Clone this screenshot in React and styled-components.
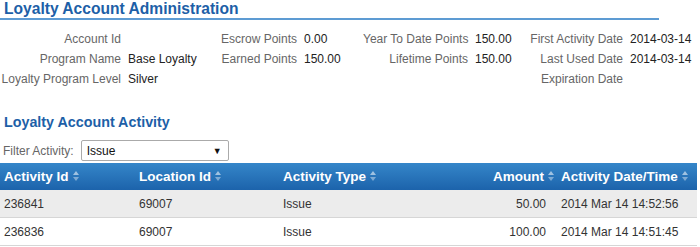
import styled, { createGlobalStyle } from "styled-components";

const Global = createGlobalStyle`
  body {
    margin: 0;
    background: #fff;
    font-family: "Liberation Sans", Arial, sans-serif;
    font-size: 12px;
    color: #333;
  }
`;

const Page = styled.div`
  width: 700px;
  height: 247px;
  overflow: hidden;
`;

const Title = styled.h1`
  margin: 0;
  width: 659px;
  padding: 0 0 1px 4px;
  box-sizing: border-box;
  font-size: 15.6px;
  line-height: 17px;
  font-weight: bold;
  color: #1d5fa7;
  border-bottom: 2px solid #5d9bd3;
`;

const InfoGrid = styled.div`
  display: grid;
  grid-template-columns: 121px 80px 82px 52px 105px 45px 96px auto;
  column-gap: 7px;
  margin-top: 9px;
`;

const Label = styled.div`
  text-align: right;
  color: #666;
  line-height: 20px;
  white-space: nowrap;
`;

const Value = styled.div`
  color: #222;
  line-height: 20px;
  white-space: nowrap;
`;

const SubTitle = styled.h2`
  margin: 25px 0 0 4px;
  font-size: 14.3px;
  line-height: 16px;
  font-weight: bold;
  color: #1d5fa7;
`;

const FilterRow = styled.div`
  display: flex;
  align-items: center;
  gap: 7px;
  margin: 10px 0 2px 3px;
`;

const FilterLabel = styled.span`
  color: #666;
`;

const Select = styled.div`
  width: 148px;
  height: 21px;
  box-sizing: border-box;
  border: 1px solid #aaa;
  border-radius: 2px;
  display: flex;
  align-items: center;
  justify-content: space-between;
  padding: 0 6px 0 5px;
  color: #111;
  font-size: 12px;
`;

const Arrow = styled.span`
  font-size: 9px;
  color: #111;
`;

const Table = styled.table`
  width: 697px;
  border-collapse: collapse;
  table-layout: fixed;
`;

const Th = styled.th`
  height: 27px;
  padding: 0 ${(p) => (p.$right ? "3px" : "0")} 0 4px;
  text-align: ${(p) => (p.$right ? "right" : "left")};
  font-size: 13.5px;
  font-weight: bold;
  color: #fff;
  white-space: nowrap;
  background: linear-gradient(#3586c9, #1c63ab);
`;

const Tr = styled.tr`
  background: ${(p) => (p.$alt ? "#ececec" : "#fff")};
  border-bottom: 1px solid #d6d6d6;
`;

const Td = styled.td`
  height: 27px;
  padding: 0 ${(p) => (p.$right ? "11px" : "0")} 0 4px;
  text-align: ${(p) => (p.$right ? "right" : "left")};
  color: #333;
  white-space: nowrap;
`;

const SortWrap = styled.span`
  display: inline-flex;
  flex-direction: column;
  gap: 2px;
  margin-left: 4px;
  vertical-align: middle;
  position: relative;
  top: -1px;
`;

const Tri = styled.span`
  width: 0;
  height: 0;
  border-left: 3.5px solid transparent;
  border-right: 3.5px solid transparent;
  ${(p) =>
    p.$down
      ? "border-top: 4px solid rgba(255,255,255,0.4);"
      : "border-bottom: 4px solid rgba(255,255,255,0.55);"}
`;

const Sort = () => (
  <SortWrap>
    <Tri />
    <Tri $down />
  </SortWrap>
);

const info = [
  ["Account Id", "", "Escrow Points", "0.00", "Year To Date Points", "150.00", "First Activity Date", "2014-03-14"],
  ["Program Name", "Base Loyalty", "Earned Points", "150.00", "Lifetime Points", "150.00", "Last Used Date", "2014-03-14"],
  ["Loyalty Program Level", "Silver", "", "", "", "", "Expiration Date", ""],
];

const rows = [
  ["236841", "69007", "Issue", "50.00", "2014 Mar 14 14:52:56"],
  ["236836", "69007", "Issue", "100.00", "2014 Mar 14 14:51:45"],
];

export default function App() {
  return (
    <Page>
      <Global />
      <Title>Loyalty Account Administration</Title>
      <InfoGrid>
        {info.map((r, i) =>
          r.map((c, j) =>
            j % 2 === 0 ? <Label key={`${i}-${j}`}>{c}</Label> : <Value key={`${i}-${j}`}>{c}</Value>
          )
        )}
      </InfoGrid>
      <SubTitle>Loyalty Account Activity</SubTitle>
      <FilterRow>
        <FilterLabel>Filter Activity:</FilterLabel>
        <Select>
          <span>Issue</span>
          <Arrow>▼</Arrow>
        </Select>
      </FilterRow>
      <Table>
        <colgroup>
          <col style={{ width: 135 }} />
          <col style={{ width: 144 }} />
          <col style={{ width: 161 }} />
          <col style={{ width: 117 }} />
          <col style={{ width: 140 }} />
        </colgroup>
        <thead>
          <tr>
            <Th>Activity Id<Sort /></Th>
            <Th>Location Id<Sort /></Th>
            <Th>Activity Type<Sort /></Th>
            <Th $right>Amount<Sort /></Th>
            <Th>Activity Date/Time<Sort /></Th>
          </tr>
        </thead>
        <tbody>
          {rows.map((r, i) => (
            <Tr key={r[0]} $alt={i === 0}>
              <Td>{r[0]}</Td>
              <Td>{r[1]}</Td>
              <Td>{r[2]}</Td>
              <Td $right>{r[3]}</Td>
              <Td>{r[4]}</Td>
            </Tr>
          ))}
        </tbody>
      </Table>
    </Page>
  );
}
